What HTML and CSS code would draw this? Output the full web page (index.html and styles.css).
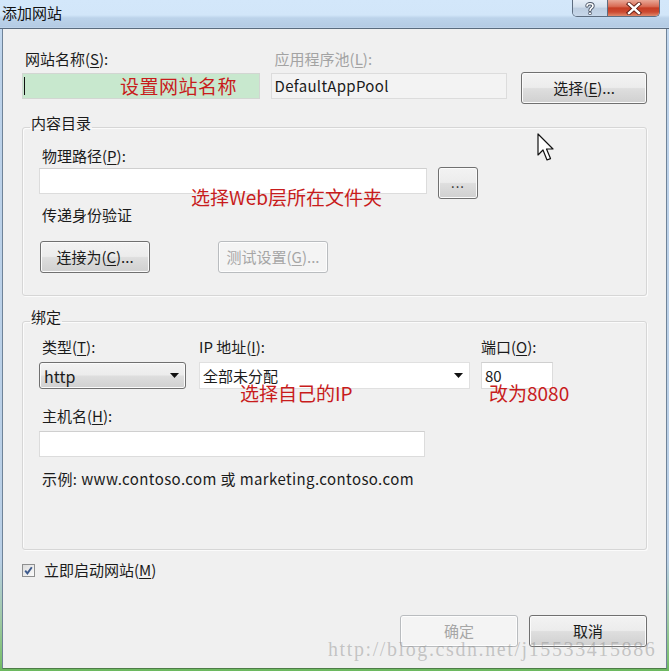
FILE: index.html
```html
<!DOCTYPE html>
<html lang="zh-CN">
<head>
<meta charset="utf-8">
<title>添加网站</title>
<link rel="stylesheet" href="styles.css">
</head>
<body>
<div class="window">
  <div class="titlebar">
    <span class="title">添加网站</span>
    <div class="caption">
      <span class="cap-btn help"><svg width="14" height="14" viewBox="0 0 14 14"><path d="M4 5 C4 2 10 2 10 5 C10 7 7 7 7 9.5" fill="none" stroke="#4a5566" stroke-width="3.4" stroke-linecap="round"/><path d="M4 5 C4 2 10 2 10 5 C10 7 7 7 7 9.5" fill="none" stroke="#fff" stroke-width="1.6" stroke-linecap="round"/><circle cx="7" cy="12.4" r="1.5" fill="#fff" stroke="#4a5566" stroke-width="0.9"/></svg></span>
      <span class="cap-btn close"><svg width="16" height="13" viewBox="0 0 16 13"><path d="M3 2 L13 11 M13 2 L3 11" stroke="#5a1a12" stroke-width="4.2" stroke-linecap="square"/><path d="M3 2 L13 11 M13 2 L3 11" stroke="#fff" stroke-width="2.4" stroke-linecap="square"/></svg></span>
    </div>
  </div>
  <div class="client">
    <div class="top-row">
      <div class="field site-name">
        <label class="lbl">网站名称(<u>S</u>):</label>
        <div class="input green"><span class="caret"></span><span class="note in-note">设置网站名称</span></div>
      </div>
      <div class="field pool">
        <label class="lbl disabled-text">应用程序池(<u>L</u>):</label>
        <div class="input readonly">DefaultAppPool</div>
      </div>
      <button class="btn select-btn">选择(<u>E</u>)...</button>
    </div>

    <fieldset class="group g1">
      <legend>内容目录</legend>
      <label class="lbl">物理路径(<u>P</u>):</label>
      <div class="path-row">
        <div class="input path"></div>
        <button class="btn dots">...</button>
      </div>
      <div class="lbl pass">传递身份验证</div>
      <div class="btn-row">
        <button class="btn w110 connect">连接为(<u>C</u>)...</button>
        <button class="btn w110 disabled test">测试设置(<u>G</u>)...</button>
      </div>
    </fieldset>

    <fieldset class="group g2">
      <legend>绑定</legend>
      <div class="bind-row">
        <div class="field type">
          <label class="lbl">类型(<u>T</u>):</label>
          <div class="combo btnlike"><span class="combo-text http">http</span><svg class="arrow" width="9" height="5" viewBox="0 0 9 5"><polygon points="0,0 9,0 4.5,5" fill="#111"/></svg></div>
        </div>
        <div class="field ip">
          <label class="lbl flush">IP 地址(<u>I</u>):</label>
          <div class="combo white"><span class="combo-text">全部未分配</span><svg class="arrow" width="9" height="5" viewBox="0 0 9 5"><polygon points="0,0 9,0 4.5,5" fill="#111"/></svg></div>
        </div>
        <div class="field port">
          <label class="lbl flush">端口(<u>O</u>):</label>
          <div class="input port-in">80</div>
        </div>
      </div>
      <label class="lbl host">主机名(<u>H</u>):</label>
      <div class="input host-in"></div>
      <div class="lbl example">示例: www.contoso.com 或 marketing.contoso.com</div>
    </fieldset>

    <div class="check-row">
      <span class="checkbox"><svg width="11" height="11" viewBox="0 0 11 11"><path d="M2.2 5.6 L4.4 8.4 L8.8 2.2" fill="none" stroke="#3d5a8c" stroke-width="1.9"/></svg></span>
      <span class="check-label">立即启动网站(<u>M</u>)</span>
    </div>

    <div class="footer">
      <button class="btn w118 disabled">确定</button>
      <button class="btn w118">取消</button>
    </div>

    <span class="note n1">选择Web层所在文件夹</span>
    <span class="note n2">选择自己的IP</span>
    <span class="note n3">改为8080</span>
    <svg class="cursor" width="20" height="30" viewBox="0 0 20 30"><path d="M1 1 L1 22 L6 17 L10 27 L13.5 25.6 L9.5 16 L16 16 Z" fill="#fff" stroke="#111" stroke-width="1.2" stroke-linejoin="round"/></svg>
  </div>
  <div class="watermark">http://blog.csdn.net/j15533415886</div>
</div>
</body>
</html>
```
FILE: styles.css
```css
* { box-sizing: border-box; }
html, body { margin: 0; padding: 0; }
body {
  width: 669px;
  height: 671px;
  overflow: hidden;
  background: #fff;
  font-family: "Noto Sans CJK SC", "Noto Sans", sans-serif;
  font-size: 15px;
  color: #1b1b1b;
}
u { text-decoration: underline; text-underline-offset: 2px; }

.window {
  position: relative;
  width: 669px;
  height: 671px;
  padding: 0 2px 2px;
  display: flex;
  flex-direction: column;
  background: linear-gradient(to bottom, #c9def3 0, #bcd2ea 60px, #b9cfe6 560px, #9fc9a4 620px, #7dc071 660px, #6cb85f 671px);
}

.titlebar {
  flex: none;
  height: 29px;
  margin: 0 -2px;
  padding-left: 2px;
  display: flex;
  align-items: flex-start;
  border-bottom: 1px solid #5a6b7e;
  background: linear-gradient(to bottom, #d3e7fa 0, #d2e6f9 15px, #bcd3ea 18px, #b4cbe4 27px, #c9dbee 28px);
}
.title {
  padding-top: 4px;
  line-height: 18px;
  font-size: 15px;
  color: #111;
}
.caption {
  margin-left: auto;
  margin-right: 9px;
  display: flex;
  height: 17px;
  border: 1px solid #5d6d80;
  border-top: none;
  border-radius: 0 0 5px 5px;
  overflow: hidden;
}
.cap-btn {
  display: flex;
  align-items: center;
  justify-content: center;
  height: 16px;
}
.help {
  width: 35px;
  border-right: 1px solid #5d6d80;
  background: linear-gradient(to bottom, #e6eef7 0, #d2dfec 45%, #bccde0 50%, #c7d7e9 100%);
}
.close {
  width: 51px;
  background: linear-gradient(to bottom, #e9a897 0, #d96c55 40%, #c63d24 50%, #cc4a31 75%, #e08a6c 100%);
}

.client {
  position: relative;
  flex: 1;
  display: flex;
  flex-direction: column;
  background: #f0f0f0;
  border: 1px solid #6f8398;
  border-top: none;
  border-bottom-color: #4d7d47;
  padding: 21px 19px 0;
}

.lbl {
  display: block;
  line-height: 18px;
  padding-left: 3px;
}
.lbl.flush { padding-left: 0; }
.disabled-text { color: #a3a3a3; }

.input {
  height: 26px;
  border: 1px solid #dcdcdc;
  border-top-color: #cfcfcf;
  background: #fff;
  display: flex;
  align-items: center;
  padding-left: 3px;
  line-height: 18px;
}

/* top row */
.top-row {
  display: flex;
  align-items: flex-start;
}
.site-name { width: 238px; }
.pool { width: 237px; margin-left: 11px; }
.pool .lbl { padding-left: 4px; }
.site-name .input, .pool .input { margin-top: 5px; }
.green {
  background: #c8e8ce;
  border-color: #d2d6d2;
  padding-left: 1px;
}
.caret {
  width: 1px;
  height: 18px;
  background: #111;
}
.in-note { margin-left: 95px; }
.readonly {
  background: #f3f3f3;
  border-color: #dcdcdc;
  letter-spacing: 0.3px;
}
.select-btn {
  width: 126px;
  height: 31px;
  margin-left: 14px;
  margin-top: 22px;
}

/* buttons */
.btn {
  font-family: inherit;
  font-size: 15px;
  line-height: 18px;
  color: #1b1b1b;
  height: 32px;
  padding: 0;
  border: 1px solid #707070;
  border-radius: 3px;
  background: linear-gradient(to bottom, #f3f3f3 0, #ececec 48%, #dedede 52%, #d0d0d0 100%);
  box-shadow: inset 0 0 0 1px #fbfbfb;
  cursor: default;
}
.btn.disabled {
  color: #a6a6a6;
  border-color: #b9bcbf;
  background: #f4f4f4;
  box-shadow: inset 0 0 0 1px #fdfdfd;
}
.w110 { width: 110px; }
.w118 { width: 118px; }

/* group boxes */
.group {
  margin: 0;
  min-width: 0;
  border: 1px solid #d6d6d6;
  border-radius: 3px;
  box-shadow: inset 1px 1px 0 #fbfbfb, 1px 1px 0 #fbfbfb;
}
.group legend {
  padding: 0 1px 8px;
  margin-left: -9px;
  line-height: 18px;
}
.g1 {
  margin-top: 10px;
  padding: 7px 16px 22px;
}
.path-row {
  display: flex;
  align-items: flex-start;
  margin-top: 3px;
}
.path { width: 388px; }
.dots {
  width: 40px;
  margin-left: 11px;
  margin-top: -1px;
  font-size: 13px;
  letter-spacing: 1px;
}
.pass { margin-top: 7px; }
.btn-row {
  display: flex;
  margin-top: 17px;
}
.connect { margin-left: 1px; }
.test { margin-left: 68px; }

.g2 {
  margin-top: 12px;
  padding: 4px 16px 61px;
}
.bind-row {
  display: flex;
  align-items: flex-start;
}
.type { width: 147px; }
.ip { width: 271px; margin-left: 13px; }
.port { width: 72px; margin-left: 11px; }
.combo, .port-in { margin-top: 6px; }
.combo {
  height: 27px;
  display: flex;
  align-items: center;
  padding: 0 6px 0 3px;
}
.combo-text { flex: 1; line-height: 18px; }
.http { font-size: 16px; padding-left: 1px; }
.btnlike {
  border: 1px solid #707070;
  border-radius: 3px;
  background: linear-gradient(to bottom, #f3f3f3 0, #ececec 48%, #dedede 52%, #d0d0d0 100%);
  box-shadow: inset 0 0 0 1px #fbfbfb;
}
.white {
  background: #fff;
  border: 1px solid #e0e0e0;
  padding-right: 6px;
}
.arrow { flex: none; }
.port-in { height: 27px; }
.host { margin-top: 18px; }
.host-in { width: 386px; margin-top: 6px; }
.example { margin-top: 13px; letter-spacing: 0.4px; }

/* checkbox */
.check-row {
  display: flex;
  align-items: center;
  margin-top: 11px;
  line-height: 18px;
}
.checkbox {
  width: 13px;
  height: 13px;
  border: 1px solid #8e8f8f;
  background: linear-gradient(to bottom right, #dcdcdc, #fbfbfb);
  display: flex;
  align-items: center;
  justify-content: center;
  margin-right: 9px;
}

/* footer */
.footer {
  display: flex;
  justify-content: flex-end;
  gap: 11px;
  margin-top: 36px;
}

/* annotations overlay */
.note {
  position: absolute;
  color: #c81c1c;
  font-family: "Noto Sans CJK SC", sans-serif;
  font-size: 19px;
  line-height: 22px;
  white-space: nowrap;
}
.in-note { position: static; letter-spacing: 0.5px; }
.n1 { left: 188px; top: 157px; }
.n2 { left: 237px; top: 353px; }
.n3 { left: 486px; top: 353px; }
.cursor { position: absolute; left: 534px; top: 104px; }

.watermark {
  position: absolute;
  left: 328px;
  top: 638px;
  font-family: "Liberation Serif", serif;
  font-size: 20px;
  line-height: 22px;
  letter-spacing: 1.6px;
  color: rgba(140, 140, 140, 0.45);
  white-space: nowrap;
}
```
